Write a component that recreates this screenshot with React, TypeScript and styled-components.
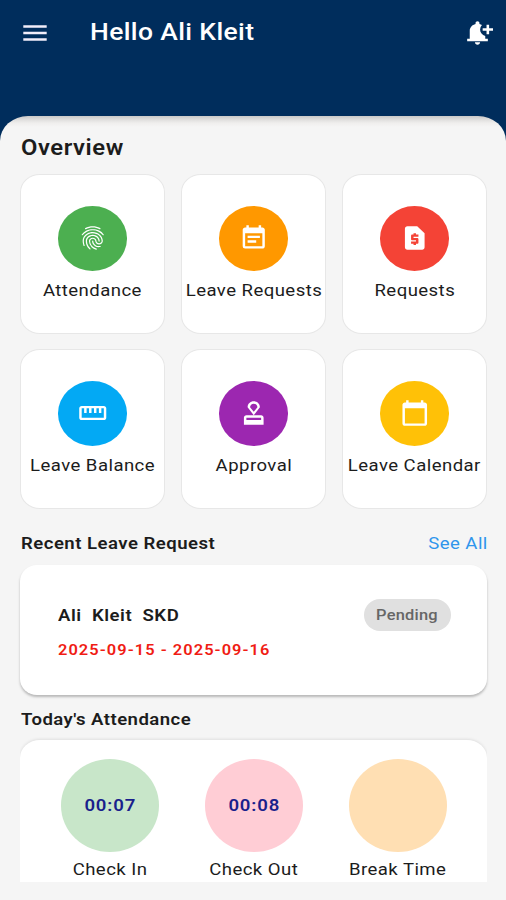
import React from "react";
import styled, { createGlobalStyle } from "styled-components";
import type { IconType } from "react-icons";
import {
  MdFingerprint,
  MdEventNote,
  MdRequestPage,
  MdStraighten,
  MdOutlineApproval,
  MdCalendarToday,
  MdNotificationAdd,
} from "react-icons/md";

const GlobalStyle = createGlobalStyle`
  *, *::before, *::after { box-sizing: border-box; }
  body {
    margin: 0;
    background: #f5f5f5;
    font-family: Roboto, "Liberation Sans", sans-serif;
  }
`;

const Screen = styled.main`
  width: 506px;
  height: 900px;
  overflow: hidden;
  display: flex;
  flex-direction: column;
  background: linear-gradient(#002d5c 160px, #f5f5f5 160px);
`;

/* Slightly extended lettering used for all labels. */
const Label = styled.span<{ $size?: number; $weight?: number; $spacing?: number; $align?: string }>`
  display: block;
  white-space: pre;
  font-size: ${(p) => p.$size ?? 17.4}px;
  font-weight: ${(p) => p.$weight ?? 400};
  letter-spacing: ${(p) => p.$spacing ?? 0.42}px;
  margin-right: -${(p) => p.$spacing ?? 0.42}px;
  line-height: 20px;
  color: #1c1c1c;
  transform: scaleX(1.067);
  transform-origin: ${(p) => p.$align ?? "center"};
`;

const AppBar = styled.header`
  flex: none;
  height: 116px;
  padding: 18px 13.5px 0 23px;
  display: flex;
  align-items: flex-start;
`;

const MenuButton = styled.button`
  width: 24px;
  height: 29px;
  padding: 0;
  border: 0;
  background: none;
  color: #f1edfa;
  display: flex;
  align-items: center;
  svg { display: block; }
`;

const Title = styled(Label).attrs({ as: "h1" })`
  margin: 0 auto 0 42.5px;
  line-height: 28px;
  color: #fff;
`;

const Bell = styled(MdNotificationAdd).attrs({ preserveAspectRatio: "none" })`
  width: 31px;
  height: 28px;
  margin-top: 1px;
  color: #fff;
`;

const Panel = styled.section`
  flex: 1;
  padding: 21px 19px 0 20px;
  border-radius: 28px 28px 0 0 / 25px 25px 0 0;
  background: linear-gradient(#c9c8c8 0, #dcdbda 3px, #efeeed 7px, #f5f5f5 11px);
`;

const Heading = styled(Label).attrs({ as: "h2", $align: "left" })`
  margin: 0 0 0 0.5px;
`;

const Tiles = styled.div`
  display: grid;
  grid-template-columns: repeat(3, 1fr);
  grid-auto-rows: 160px;
  gap: 15px 16px;
  margin-top: 17px;
`;

const Tile = styled.div`
  display: flex;
  flex-direction: column;
  align-items: center;
  padding-top: 31px;
  border: 1px solid #e7e7e7;
  border-radius: 20px / 18px;
  background: #fff;
`;

const Disc = styled.div<{ $color: string }>`
  width: 69px;
  height: 64.5px;
  margin-bottom: 9.5px;
  border-radius: 50%;
  background: ${(p) => p.$color};
  color: #fff;
  display: flex;
  align-items: center;
  justify-content: center;
  svg { width: 29.5px; height: 28px; }
`;

const SectionBar = styled.div`
  display: flex;
  justify-content: space-between;
  margin-top: 24px;
`;

const Link = styled(Label)`
  color: #2f95ec;
`;

const RequestCard = styled.article`
  display: flex;
  justify-content: space-between;
  height: 130px;
  margin-top: 12px;
  padding: 34px 36.5px 0 37.5px;
  border-radius: 17px / 16px;
  background: #fff;
  box-shadow: 0 2px 2.5px rgba(0, 0, 0, 0.25);
`;

const RequestInfo = styled.div`
  display: flex;
  flex-direction: column;
  gap: 15px;
  padding-top: 6px;
`;

const Dates = styled(Label)`
  color: #f01c14;
`;

const Status = styled.div`
  width: 87px;
  height: 32px;
  border-radius: 16px;
  background: #e0e0e0;
  display: flex;
  align-items: center;
  justify-content: center;
`;

const StatusText = styled(Label)`
  color: #666;
`;

const TodayHeading = styled(Heading)`
  margin-top: 14px;
`;

const TodayCard = styled.div`
  display: flex;
  justify-content: center;
  gap: 46px;
  height: 142px;
  margin-top: 11px;
  padding-top: 19px;
  border-radius: 20px 20px 0 0 / 18px 18px 0 0;
  background: #fff;
  box-shadow: 0 -1px 3px rgba(0, 0, 0, 0.09);
  clip-path: inset(-6px 0 0 0);
`;

const Punch = styled.div`
  width: 98px;
  display: flex;
  flex-direction: column;
  align-items: center;
`;

const PunchDisc = styled.div<{ $color: string }>`
  width: 98px;
  height: 92.5px;
  margin-bottom: 7.5px;
  border-radius: 50%;
  background: ${(p) => p.$color};
  display: flex;
  align-items: center;
  justify-content: center;
`;

const Time = styled(Label)`
  color: #1a1f8c;
`;

const tiles: { label: string; color: string; icon: IconType }[] = [
  { label: "Attendance", color: "#4caf50", icon: MdFingerprint },
  { label: "Leave Requests", color: "#ff9800", icon: MdEventNote },
  { label: "Requests", color: "#f44336", icon: MdRequestPage },
  { label: "Leave Balance", color: "#03a9f4", icon: MdStraighten },
  { label: "Approval", color: "#9c27b0", icon: MdOutlineApproval },
  { label: "Leave Calendar", color: "#ffc107", icon: MdCalendarToday },
];

const punches = [
  { label: "Check In", time: "00:07", color: "#c8e6c9" },
  { label: "Check Out", time: "00:08", color: "#ffcdd5" },
  { label: "Break Time", time: "", color: "#ffdfb3" },
];

export default function App() {
  return (
    <>
      <GlobalStyle />
      <Screen>
        <AppBar>
          <MenuButton aria-label="Menu">
            <svg width="24" height="18" viewBox="0 0 24 18">
              <path d="M.3 2.5h23.4M.3 9h23.4M.3 15.5h23.4" stroke="currentColor" strokeWidth="2.7" />
            </svg>
          </MenuButton>
          <Title $size={24.8} $weight={500} $spacing={0.35} $align="left">Hello Ali Kleit</Title>
          <Bell />
        </AppBar>
        <Panel>
          <Heading $size={22.3} $weight={600} $spacing={0.55}>Overview</Heading>
          <Tiles>
            {tiles.map(({ label, color, icon: Icon }) => (
              <Tile key={label}>
                <Disc $color={color}>
                  <Icon preserveAspectRatio="none" />
                </Disc>
                <Label>{label}</Label>
              </Tile>
            ))}
          </Tiles>
          <SectionBar>
            <Heading $weight={600} $spacing={0.45}>Recent Leave Request</Heading>
            <Link $align="right">See All</Link>
          </SectionBar>
          <RequestCard>
            <RequestInfo>
              <Label $weight={600} $spacing={0.5} $align="left">{"Ali  Kleit  SKD"}</Label>
              <Dates $size={15.4} $weight={600} $spacing={0.98} $align="left">2025-09-15 - 2025-09-16</Dates>
            </RequestInfo>
            <Status>
              <StatusText $size={15.4} $weight={500} $spacing={0.2}>Pending</StatusText>
            </Status>
          </RequestCard>
          <TodayHeading $weight={600}>Today's Attendance</TodayHeading>
          <TodayCard>
            {punches.map(({ label, time, color }) => (
              <Punch key={label}>
                <PunchDisc $color={color}>
                  {time && <Time $weight={600} $spacing={0.8}>{time}</Time>}
                </PunchDisc>
                <Label>{label}</Label>
              </Punch>
            ))}
          </TodayCard>
        </Panel>
      </Screen>
    </>
  );
}
